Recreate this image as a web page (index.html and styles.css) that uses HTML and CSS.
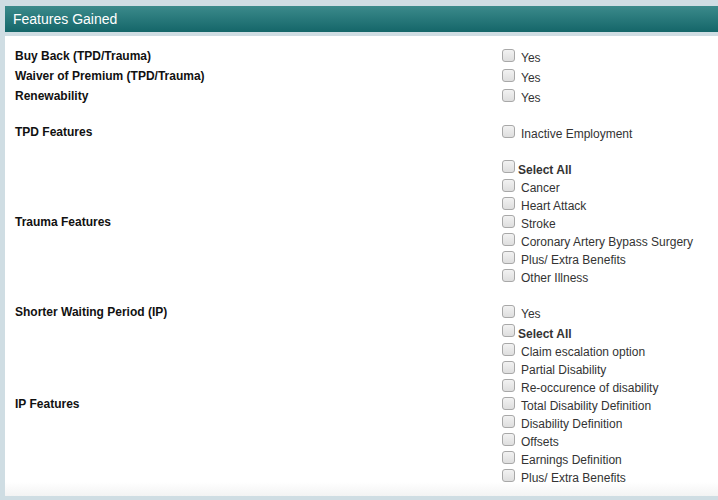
FILE: index.html
```html
<!DOCTYPE html>
<html>
<head>
<meta charset="utf-8">
<link rel="stylesheet" href="styles.css">
</head>
<body>
<div class="wrap">
  <div class="head">Features Gained</div>
  <div class="panel">
    <div class="row r20">
      <div class="label">Buy Back (TPD/Trauma)</div>
      <div class="opts"><label class="opt"><input type="checkbox"><span>Yes</span></label></div>
    </div>
    <div class="row r20">
      <div class="label">Waiver of Premium (TPD/Trauma)</div>
      <div class="opts"><label class="opt"><input type="checkbox"><span>Yes</span></label></div>
    </div>
    <div class="row r20">
      <div class="label">Renewability</div>
      <div class="opts"><label class="opt"><input type="checkbox"><span>Yes</span></label></div>
    </div>
    <div class="row r20 gap-tpd">
      <div class="label">TPD Features</div>
      <div class="opts"><label class="opt"><input type="checkbox"><span>Inactive Employment</span></label></div>
    </div>
    <div class="row multi gap-trauma">
      <div class="label">Trauma Features</div>
      <div class="opts">
        <label class="opt all"><input type="checkbox"><span>Select All</span></label>
        <label class="opt"><input type="checkbox"><span>Cancer</span></label>
        <label class="opt"><input type="checkbox"><span>Heart Attack</span></label>
        <label class="opt"><input type="checkbox"><span>Stroke</span></label>
        <label class="opt"><input type="checkbox"><span>Coronary Artery Bypass Surgery</span></label>
        <label class="opt"><input type="checkbox"><span>Plus/ Extra Benefits</span></label>
        <label class="opt"><input type="checkbox"><span>Other Illness</span></label>
      </div>
    </div>
    <div class="row gap-swp">
      <div class="label">Shorter Waiting Period (IP)</div>
      <div class="opts"><label class="opt"><input type="checkbox"><span>Yes</span></label></div>
    </div>
    <div class="row multi gap-ip">
      <div class="label">IP Features</div>
      <div class="opts">
        <label class="opt all"><input type="checkbox"><span>Select All</span></label>
        <label class="opt"><input type="checkbox"><span>Claim escalation option</span></label>
        <label class="opt"><input type="checkbox"><span>Partial Disability</span></label>
        <label class="opt"><input type="checkbox"><span>Re-occurence of disability</span></label>
        <label class="opt"><input type="checkbox"><span>Total Disability Definition</span></label>
        <label class="opt"><input type="checkbox"><span>Disability Definition</span></label>
        <label class="opt"><input type="checkbox"><span>Offsets</span></label>
        <label class="opt"><input type="checkbox"><span>Earnings Definition</span></label>
        <label class="opt"><input type="checkbox"><span>Plus/ Extra Benefits</span></label>
      </div>
    </div>
  </div>
</div>
</body>
</html>
```

FILE: styles.css
```css
html, body {
  margin: 0;
  padding: 0;
  background: #cfdde3;
  font-family: "Liberation Sans", Arial, sans-serif;
  font-size: 12px;
  overflow: hidden;
}
.wrap {
  padding: 6px 0 0 5px;
}
.head {
  height: 26px;
  line-height: 26px;
  padding-left: 8px;
  color: #fff;
  font-size: 14px;
  background: linear-gradient(to bottom, #3b8a8b, #146669);
}
.panel {
  margin-top: 4px;
  background: linear-gradient(to bottom, #fff 0, #fff 446px, #f3f3f3 100%);
  padding: 12px 0 9px 0;
}
.row {
  display: flex;
  align-items: center;
}
.label {
  box-sizing: border-box;
  width: 497px;
  padding-left: 10px;
  padding-bottom: 4px;
  font-weight: bold;
  color: #111;
}
.multi .label {
  padding-bottom: 2px;
}
.opts {
  display: flex;
  flex-direction: column;
}
.opt {
  display: flex;
  align-items: center;
  height: 18px;
  color: #333;
}
.r20 .opt {
  height: 20px;
}
.opt input {
  appearance: none;
  -webkit-appearance: none;
  width: 13px;
  height: 13px;
  margin: 0 6px 5px 0;
  box-sizing: border-box;
  border: 1px solid #a8a8a8;
  border-radius: 3px;
  background: linear-gradient(to bottom, #f2f2f2, #dedede);
}
.opt.all {
  height: 21px;
}
.opt.all span {
  font-weight: bold;
  margin-left: -3px;
  position: relative;
  top: 1px;
}
.gap-tpd { margin-top: 16px; }
.gap-trauma { margin-top: 14px; }
.gap-swp { margin-top: 18px; }
.gap-ip { margin-top: -1px; }
```
